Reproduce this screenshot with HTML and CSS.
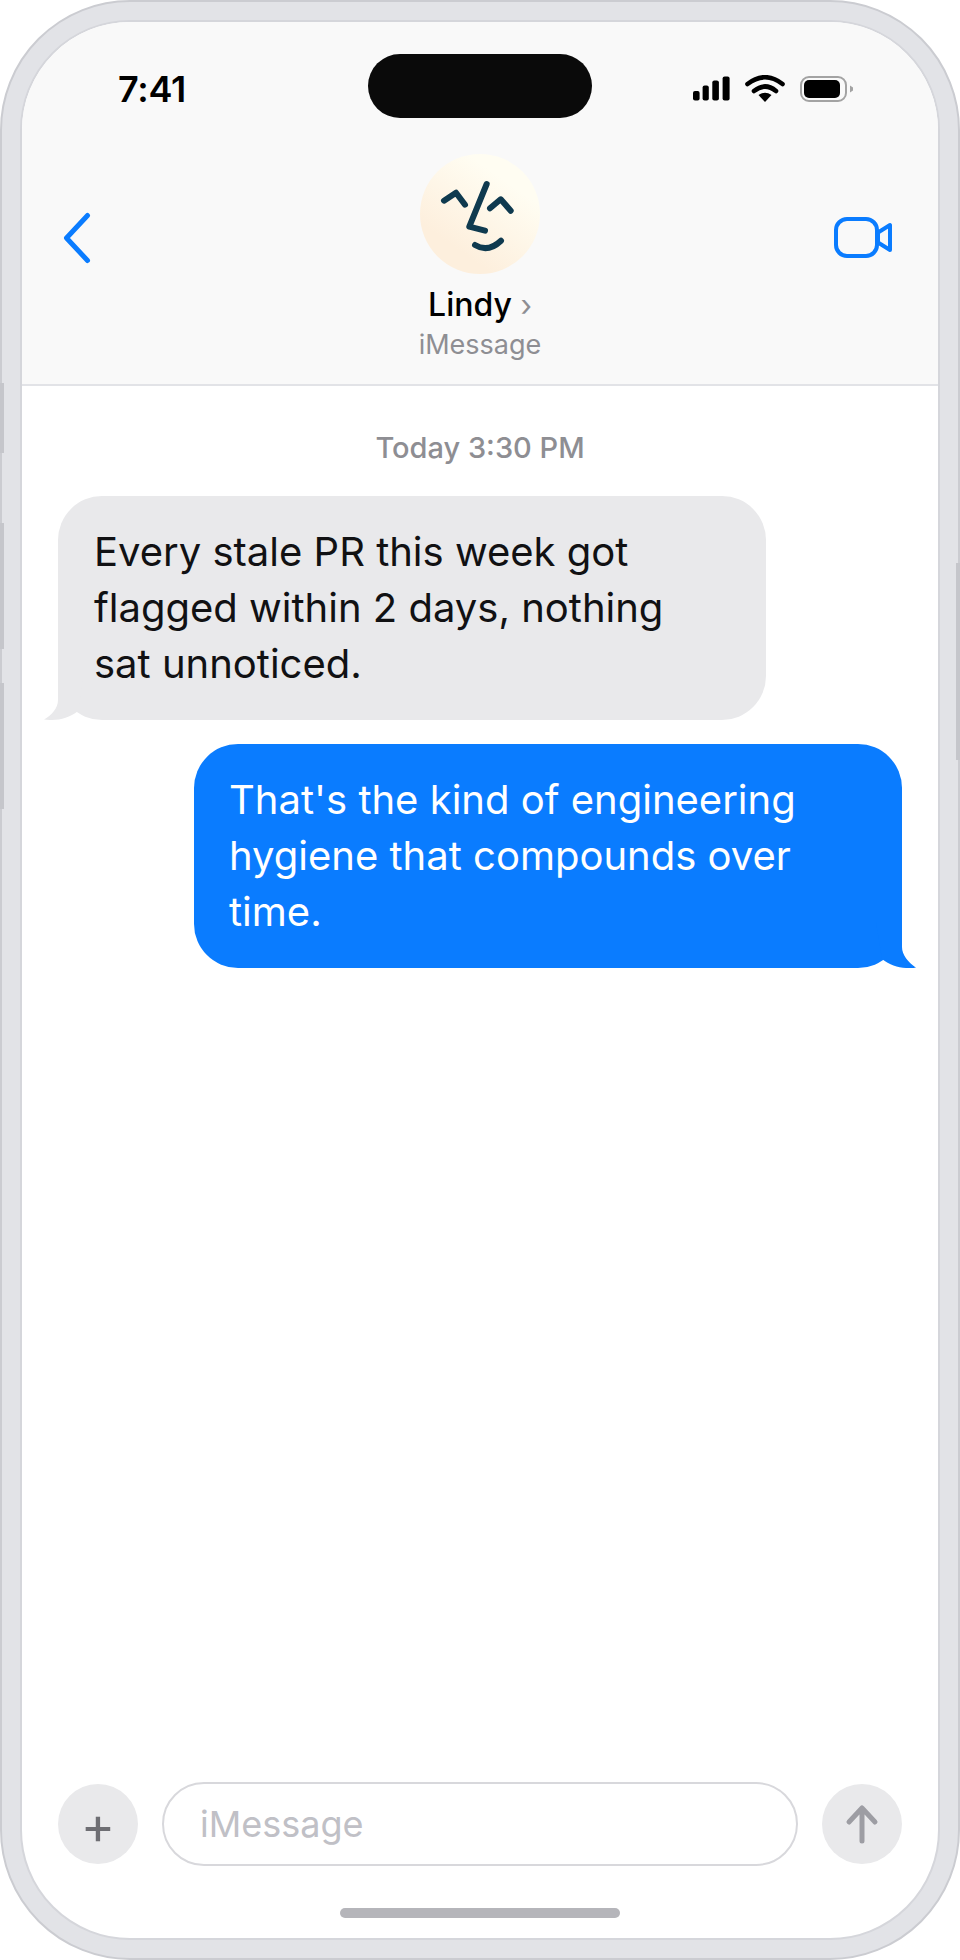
FILE: index.html
```html
<!DOCTYPE html>
<html lang="en">
<head>
  <meta charset="UTF-8">
  <title>iMessage</title>
  <link rel="stylesheet" href="styles.css">
</head>
<body>
  <div class="phone">
    <span class="side-btn mute"></span>
    <span class="side-btn vol-up"></span>
    <span class="side-btn vol-down"></span>
    <span class="side-btn power"></span>

    <div class="screen">
      <div class="island"></div>

      <header class="header">
        <div class="status">
          <span class="time">7:41</span>
          <div class="status-icons">
            <svg class="signal" width="38" height="26" viewBox="0 0 38 26">
              <rect x="1" y="15" width="6.6" height="9.4" rx="2"/>
              <rect x="10.6" y="9.4" width="6.2" height="15" rx="2"/>
              <rect x="20.3" y="4.4" width="6.6" height="20" rx="2"/>
              <rect x="30.6" y="0.4" width="7" height="24" rx="2"/>
            </svg>
            <svg class="wifi" width="40" height="28" viewBox="0 0 40 28">
              <path d="M2.5 9Q20 -4.5 37.5 9" fill="none" stroke="#000" stroke-width="4.6" stroke-linecap="round"/>
              <path d="M9 16Q20 7 31 16" fill="none" stroke="#000" stroke-width="4.6" stroke-linecap="round"/>
              <path d="M20 27L13.5 20Q20 15.5 26.5 20Z"/>
            </svg>
            <svg class="battery" width="56" height="28" viewBox="0 0 56 28">
              <rect x="2" y="2" width="45" height="24" rx="8" fill="none" stroke="#a3a3a3" stroke-width="2"/>
              <rect x="5" y="5" width="36" height="18" rx="5"/>
              <path d="M51 10.500L54 12.500V15.500L51 17.500Z" fill="#a3a3a3"/>
            </svg>
          </div>
        </div>

        <div class="nav">
          <svg class="back" width="30" height="54" viewBox="0 0 30 54">
            <path d="M25.500 4.500L4.500 27L25.500 49.500" fill="none" stroke="#0a7cff" stroke-width="5" stroke-linecap="round" stroke-linejoin="round"/>
          </svg>
          <div class="contact">
            <div class="avatar">
              <svg width="120" height="120" viewBox="0 0 120 120">
                <g fill="none" stroke="#0f3a4f" stroke-width="6" stroke-linecap="round" stroke-linejoin="round">
                  <path d="M24 46.700L36 38.700L45 50.700"/>
                  <path d="M70 54.300L80.700 45.300L90.700 56.700"/>
                  <path d="M66.700 30L49.300 72.700L65 76.700"/>
                  <path d="M55 91Q68 99 81 86.700"/>
                </g>
              </svg>
            </div>
            <div class="name">Lindy <span class="name-chevron">›</span></div>
            <div class="service">iMessage</div>
          </div>
          <svg class="video" width="62" height="45" viewBox="0 0 62 45">
            <rect x="4" y="4" width="41" height="37" rx="11" fill="none" stroke="#0a7cff" stroke-width="4"/>
            <path d="M46 17.500L58 10V35L46 27.500Z" fill="none" stroke="#0a7cff" stroke-width="4" stroke-linejoin="round"/>
          </svg>
        </div>
      </header>

      <main class="thread">
        <div class="timestamp">Today 3:30 PM</div>

        <div class="bubble incoming">
          Every stale PR this week got flagged within 2 days, nothing sat unnoticed.
          <svg class="tail" width="40" height="46" viewBox="0 0 40 46">
            <path d="M14 0V26C14 34 8 41 0 45.600C12 47 24 45 34 37L40 0Z" fill="#e9e9eb"/>
          </svg>
        </div>

        <div class="bubble outgoing">
          That's the kind of engineering hygiene that compounds over time.
          <svg class="tail" width="40" height="46" viewBox="0 0 40 46">
            <path d="M26 0V25C26 33 32 40 40 45.800C28 47 16 45 6 37L0 0Z" fill="#0a7cff"/>
          </svg>
        </div>
      </main>

      <footer class="composer">
        <div class="round-btn plus">+</div>
        <div class="input">iMessage</div>
        <div class="round-btn">
          <svg width="40" height="44" viewBox="0 0 40 44">
            <path d="M20 39V7M7 20L20 6L33 20" fill="none" stroke="#9d9da3" stroke-width="5" stroke-linecap="round" stroke-linejoin="round"/>
          </svg>
        </div>
      </footer>

      <div class="home-bar"></div>
    </div>
  </div>
</body>
</html>
```

FILE: styles.css
```css
* {
  box-sizing: border-box;
}

body {
  margin: 0;
  background: #fff;
  font-family: "Inter", "Liberation Sans", sans-serif;
}

.phone {
  position: relative;
  width: 960px;
  height: 1960px;
  padding: 18px;
  background: #e2e3e7;
  border: 2px solid #cbccd1;
  border-radius: 130px;
}

.side-btn {
  position: absolute;
  left: -2px;
  width: 4px;
  background: #c5c6cb;
}

.mute {
  top: 381px;
  height: 70px;
}

.vol-up {
  top: 521px;
  height: 126px;
}

.vol-down {
  top: 681px;
  height: 126px;
}

.power {
  left: auto;
  right: -2px;
  top: 561px;
  height: 197px;
}

.screen {
  position: relative;
  display: flex;
  flex-direction: column;
  height: 100%;
  background: #fff;
  border: 2px solid #d5d6db;
  border-radius: 110px;
  overflow: hidden;
}

.island {
  position: absolute;
  top: 32px;
  left: 346px;
  width: 224px;
  height: 64px;
  background: #0a0a0a;
  border-radius: 32px;
}

/* header */

.header {
  height: 364px;
  background: #f9f9f9;
  border-bottom: 2px solid #e2e3e7;
}

.status {
  display: flex;
  justify-content: space-between;
  align-items: center;
  height: 50px;
  margin-top: 42px;
  padding: 0 83px 0 96px;
}

.time {
  font-size: 36px;
  font-weight: 600;
  letter-spacing: -0.3px;
  color: #000;
}

.status-icons {
  display: flex;
  align-items: center;
  gap: 14px;
}

.signal {
  margin-right: 1px;
}

.nav {
  display: grid;
  grid-template-columns: 1fr auto 1fr;
  align-items: start;
  padding: 40px 40px 0;
}

.back {
  margin-top: 57px;
}

.video {
  justify-self: end;
  margin: 61px 4px 0 0;
}

.contact {
  display: flex;
  flex-direction: column;
  align-items: center;
}

.avatar {
  width: 120px;
  height: 120px;
  border-radius: 50%;
  background: linear-gradient(215deg, #fffdf2 25%, #fdefdd 75%);
}

.name {
  margin-top: 13px;
  font-size: 32px;
  font-weight: 500;
  line-height: 36px;
  color: #000;
}

.name-chevron {
  font-size: 30px;
  font-weight: 400;
  color: #8e8e93;
}

.service {
  margin-top: 6px;
  font-size: 27px;
  line-height: 32px;
  color: #8e8e93;
}

/* messages */

.thread {
  flex: 1;
  display: flex;
  flex-direction: column;
  gap: 24px;
  padding: 46px 36px 0;
}

.timestamp {
  margin-bottom: 8px;
  font-size: 29px;
  font-weight: 500;
  line-height: 32px;
  text-align: center;
  color: #8e8e93;
}

.bubble {
  position: relative;
  width: 708px;
  padding: 28px 36px;
  font-size: 40px;
  line-height: 56px;
  border-radius: 44px;
}

.incoming {
  background: #e9e9eb;
  color: #111113;
}

.outgoing {
  align-self: flex-end;
  padding-left: 35px;
  background: #0a7cff;
  color: #fff;
}

.tail {
  position: absolute;
  bottom: 0;
}

.incoming .tail {
  left: -14px;
}

.outgoing .tail {
  right: -14px;
}

/* composer */

.composer {
  display: flex;
  align-items: center;
  gap: 24px;
  padding: 0 36px;
}

.round-btn {
  flex: none;
  display: flex;
  align-items: center;
  justify-content: center;
  width: 80px;
  height: 80px;
  background: #e9e9eb;
  border-radius: 50%;
}

.plus {
  padding-top: 3px;
  font-size: 52px;
  line-height: 1;
  color: #6e6e73;
}

.input {
  flex: 1;
  height: 84px;
  padding-left: 36px;
  font-size: 36px;
  line-height: 80px;
  color: #c0c0c6;
  border: 2px solid #d8d8dc;
  border-radius: 42px;
}

.home-bar {
  flex: none;
  width: 280px;
  height: 10px;
  margin: 42px auto 20px;
  background: #b5b5ba;
  border-radius: 5px;
}
```
